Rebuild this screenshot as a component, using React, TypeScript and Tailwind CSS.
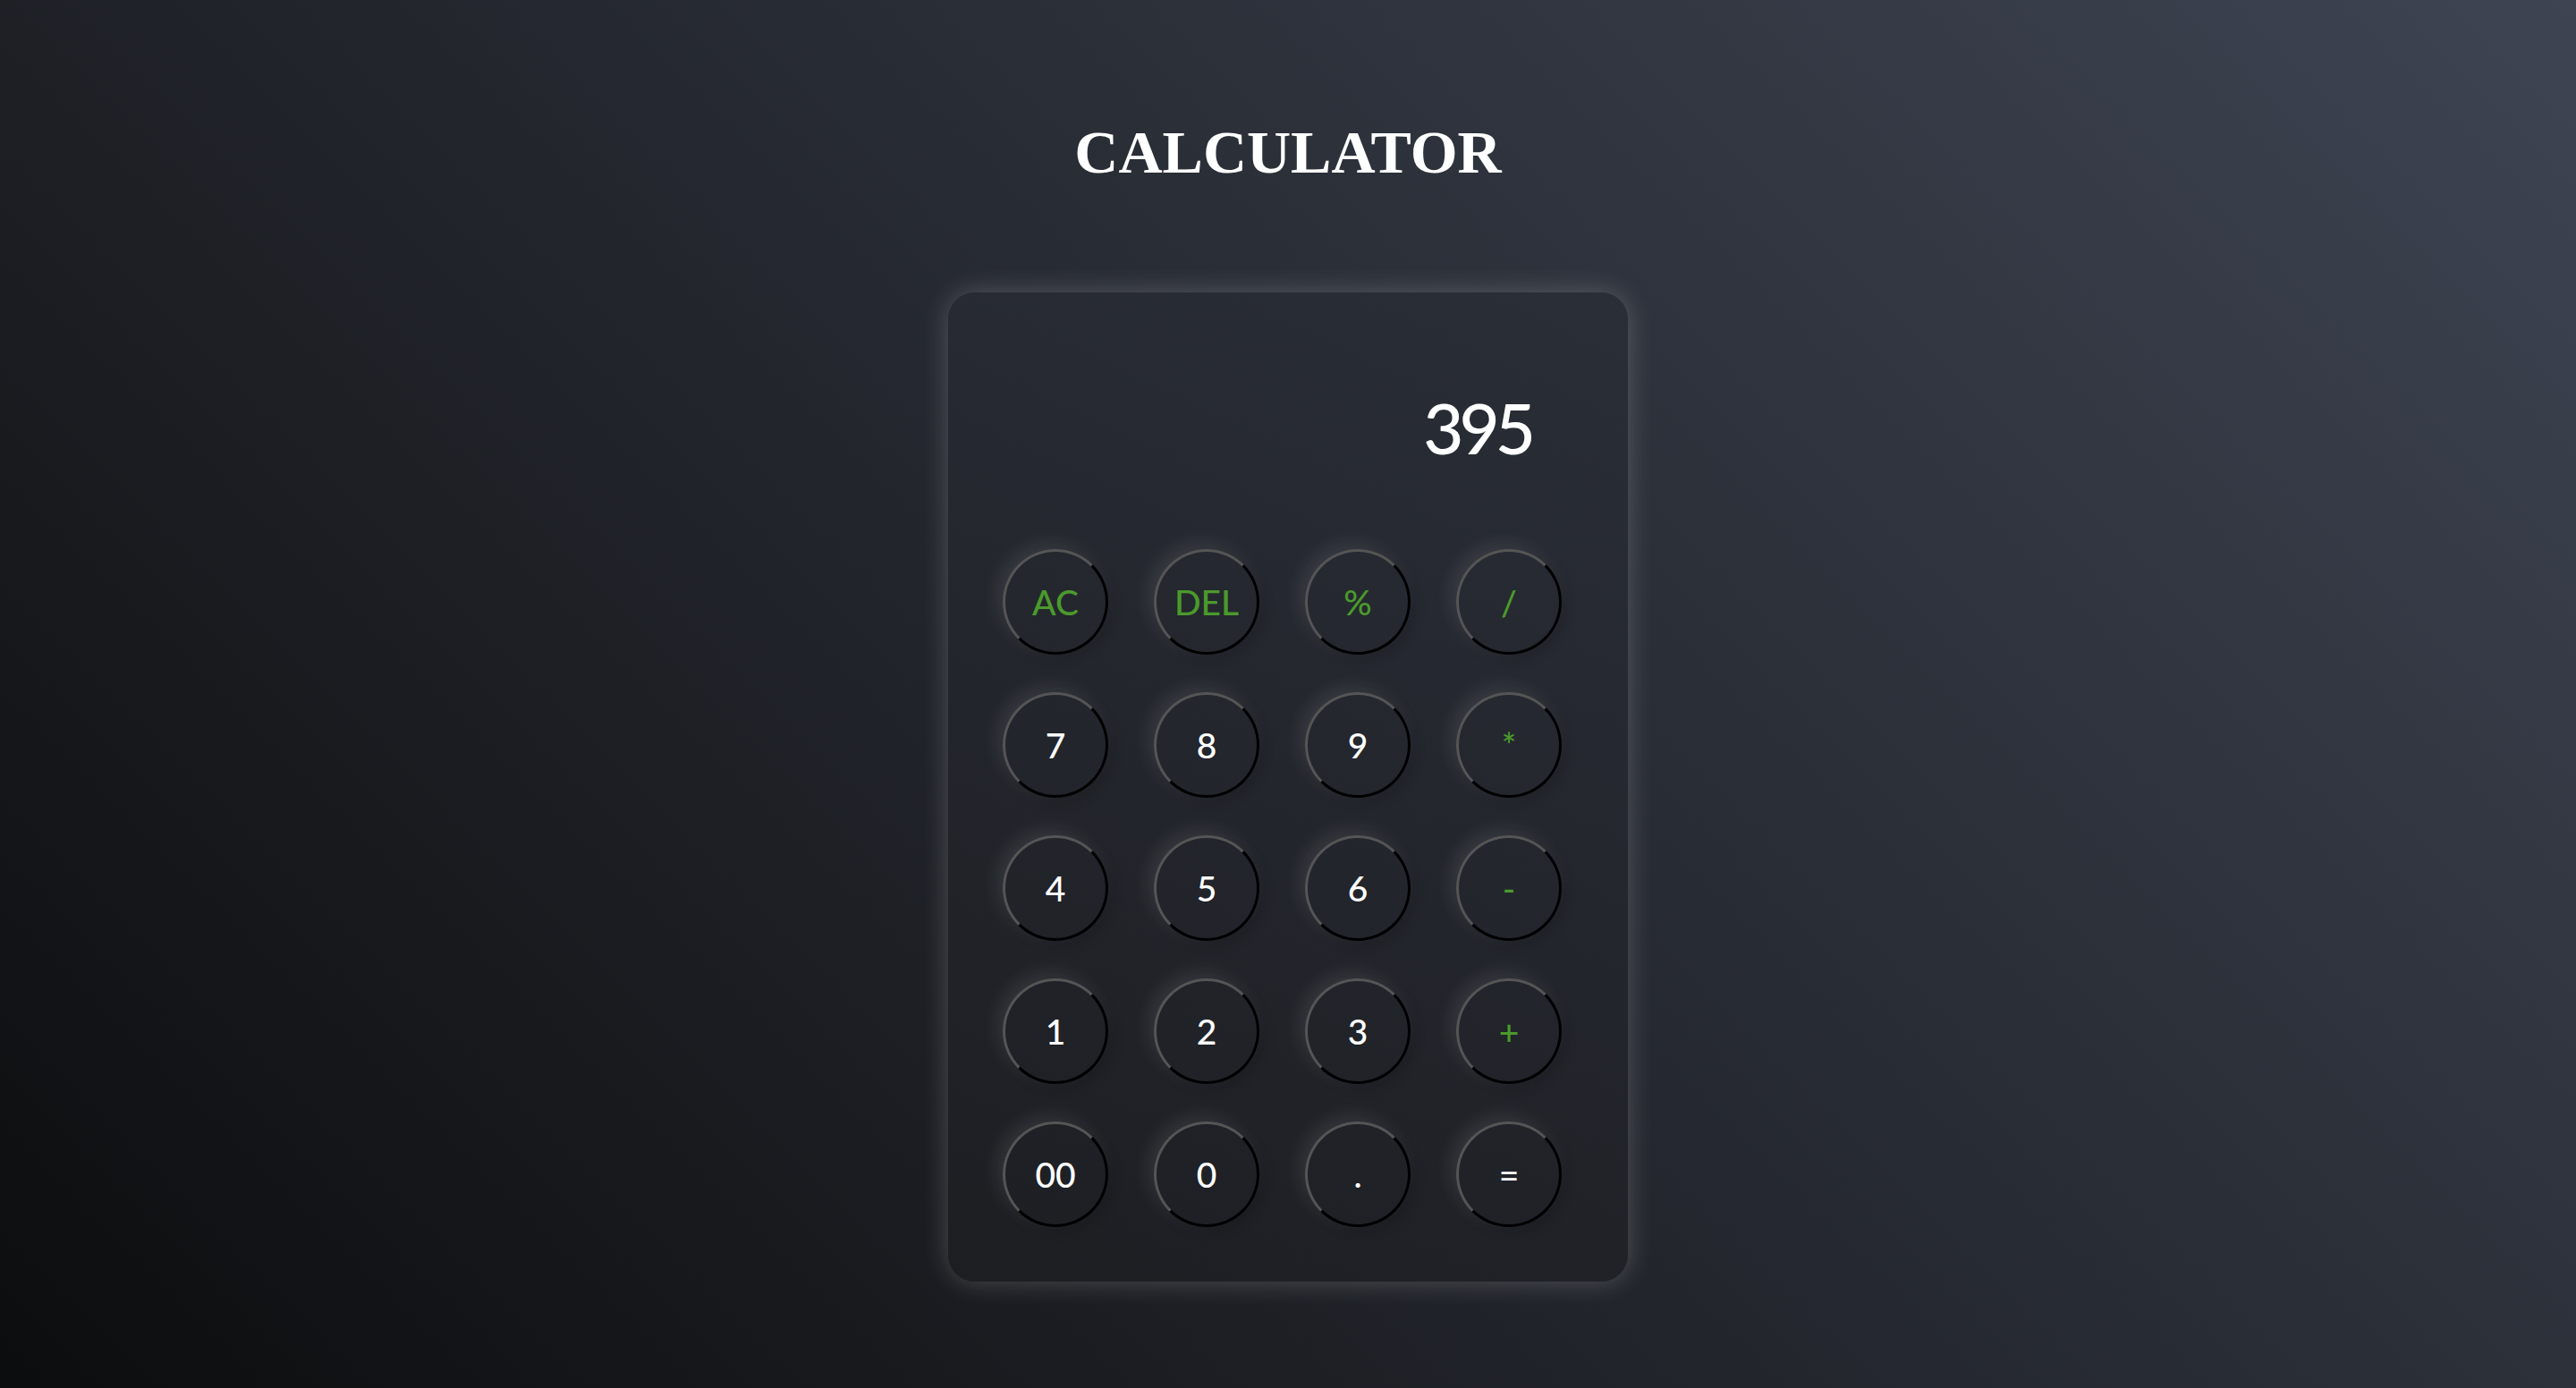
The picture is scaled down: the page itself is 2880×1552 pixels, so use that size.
const keys: { label: string; op?: boolean }[] = [
  { label: 'AC', op: true },
  { label: 'DEL', op: true },
  { label: '%', op: true },
  { label: '/', op: true },
  { label: '7' },
  { label: '8' },
  { label: '9' },
  { label: '*', op: true },
  { label: '4' },
  { label: '5' },
  { label: '6' },
  { label: '-', op: true },
  { label: '1' },
  { label: '2' },
  { label: '3' },
  { label: '+', op: true },
  { label: '00' },
  { label: '0' },
  { label: '.' },
  { label: '=' },
]

export default function App() {
  return (
    <div className="min-h-screen w-full bg-linear-[45deg,#0c0d0e,#3e4452] flex flex-col items-center pt-[136px] pb-[100px]">
      <h1 className="text-white font-bold text-[68px] leading-none font-['Liberation_Serif',serif]">
        CALCULATOR
      </h1>

      <div className="mt-[123px] w-[760px] rounded-[30px] bg-linear-[25deg,#1c1e22,#2a2e37] shadow-[0_0_30px_rgba(255,255,255,0.22)] pl-[61px] pb-[61px] font-['Lato',sans-serif]">
        <div className="h-[287px] pt-[112px] pr-[108px] text-right">
          <span className="text-white text-[78px] font-medium leading-none tracking-[-5px]">395</span>
        </div>

        <div className="grid grid-cols-[repeat(4,118px)] gap-x-[51px] gap-y-[42px]">
          {keys.map((k) => (
            <button
              key={k.label}
              className={`w-[118px] h-[118px] rounded-full border-[3px] border-t-[#555555] border-l-[#555555] border-r-black border-b-black bg-transparent shadow-[-6px_-6px_20px_rgba(255,255,255,0.1),4px_4px_14px_rgba(0,0,0,0.2)] flex items-center justify-center text-[39px] font-medium leading-none ${
                k.op ? 'text-[#4b9a2c]' : 'text-white'
              }`}
            >
              {k.label}
            </button>
          ))}
        </div>
      </div>
    </div>
  )
}
